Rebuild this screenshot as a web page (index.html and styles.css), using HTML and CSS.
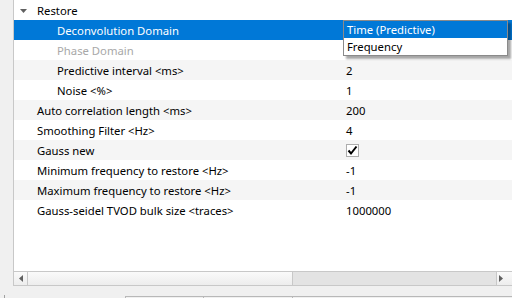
FILE: index.html
```html
<!DOCTYPE html>
<html lang="en">
<head>
    <meta charset="UTF-8">
    <title>Properties</title>
    <link rel="stylesheet" href="styles.css">
</head>
<body>
    <div class="main">
        <div class="gutter"></div>
        <div class="panel">
            <div class="rows">
                <div class="row">
                    <div class="name lvl0">
                        <svg class="caret" width="7" height="4" viewBox="0 0 7 4"><path d="M0 0H7L3.5 4Z" fill="#606060"/></svg>
                        Restore
                    </div>
                    <div class="value"></div>
                </div>
                <div class="row selected">
                    <div class="name lvl2">Deconvolution Domain</div>
                    <div class="value"></div>
                </div>
                <div class="row">
                    <div class="name lvl2 disabled">Phase Domain</div>
                    <div class="value"></div>
                </div>
                <div class="row alt">
                    <div class="name lvl2">Predictive interval &lt;ms&gt;</div>
                    <div class="value">2</div>
                </div>
                <div class="row">
                    <div class="name lvl2">Noise &lt;%&gt;</div>
                    <div class="value">1</div>
                </div>
                <div class="row alt">
                    <div class="name lvl1">Auto correlation length &lt;ms&gt;</div>
                    <div class="value">200</div>
                </div>
                <div class="row">
                    <div class="name lvl1">Smoothing Filter &lt;Hz&gt;</div>
                    <div class="value">4</div>
                </div>
                <div class="row alt">
                    <div class="name lvl1">Gauss new</div>
                    <div class="value">
                        <span class="check">
                            <svg width="11" height="11" viewBox="0 0 11 11"><path d="M1.5 5.5L4 8.5L9.5 1.5" fill="none" stroke="#000" stroke-width="2"/></svg>
                        </span>
                    </div>
                </div>
                <div class="row">
                    <div class="name lvl1">Minimum frequency to restore &lt;Hz&gt;</div>
                    <div class="value">-1</div>
                </div>
                <div class="row alt">
                    <div class="name lvl1">Maximum frequency to restore &lt;Hz&gt;</div>
                    <div class="value">-1</div>
                </div>
                <div class="row">
                    <div class="name lvl1">Gauss-seidel TVOD bulk size &lt;traces&gt;</div>
                    <div class="value">1000000</div>
                </div>
            </div>
            <div class="hscroll">
                <div class="sbtn">
                    <svg width="4" height="7" viewBox="0 0 4 7"><path d="M4 0V7L0 3.5Z" fill="#606060"/></svg>
                </div>
                <div class="track"></div>
                <div class="thumb"></div>
                <div class="sbtn right">
                    <svg width="4" height="7" viewBox="0 0 4 7"><path d="M0 0V7L4 3.5Z" fill="#606060"/></svg>
                </div>
            </div>
            <div class="dropdown">
                <div class="option active">Time (Predictive)</div>
                <div class="option">Frequency</div>
            </div>
        </div>
    </div>
    <div class="bottom">
        <div class="tick"></div>
        <div class="tab first"></div>
        <div class="tab second"></div>
        <div class="tab third"></div>
    </div>
</body>
</html>
```

FILE: styles.css
```css
body {
    margin: 0;
    width: 512px;
    height: 298px;
    overflow: hidden;
    background-color: #f0f0f0;
    font-family: 'Noto Sans', 'Open Sans', sans-serif;
    font-size: 11.3px;
    color: #000;
}
.main {
    display: flex;
    height: 286px;
}
.gutter {
    width: 13px;
    flex: none;
}
.panel {
    flex: 1;
    position: relative;
    display: flex;
    flex-direction: column;
    background-color: #fff;
    border-left: 1px solid #c8c8c8;
    border-bottom: 1px solid #c8c8c8;
}
.rows {
    flex: 1;
}
.row {
    display: flex;
    height: 20px;
    line-height: 20px;
    white-space: nowrap;
}
.row.alt {
    background-color: #f5f5f5;
}
.row.selected {
    background-color: #0078d7;
    color: #fff;
}
.name {
    width: 329px;
    flex: none;
    display: flex;
    align-items: center;
    padding-top: 1px;
    box-sizing: border-box;
}
.lvl0 {
    padding-left: 6px;
}
.lvl1 {
    padding-left: 23px;
}
.lvl2 {
    padding-left: 43px;
}
.caret {
    margin-right: 10px;
}
.disabled {
    color: #a8a8a8;
}
.value {
    flex: 1;
    padding-left: 3px;
    padding-top: 1px;
    display: flex;
    align-items: center;
}
.check {
    width: 11px;
    height: 11px;
    border: 1px solid #adadad;
    background-color: #fff;
    display: flex;
    align-items: center;
    justify-content: center;
}
.hscroll {
    height: 13px;
    display: flex;
    border-top: 1px solid #c8c8c8;
    background: linear-gradient(#fafafa, #ededed);
}
.sbtn {
    width: 13px;
    flex: none;
    display: flex;
    align-items: center;
    justify-content: center;
    border-right: 1px solid #c8c8c8;
}
.sbtn.right {
    border-right: none;
    border-left: 1px solid #c8c8c8;
    justify-content: flex-start;
    padding-left: 2px;
}
.track {
    width: 264px;
    flex: none;
}
.thumb {
    flex: 1;
    background-color: #e3e3e3;
    border-left: 1px solid #c8c8c8;
}
.dropdown {
    position: absolute;
    left: 329px;
    top: 20px;
    width: 163px;
    border: 1px solid #8a8a8a;
    background-color: #fff;
    box-shadow: 3px 3px 2px rgba(0, 0, 0, 0.35);
}
.option {
    height: 17px;
    line-height: 18px;
    padding-left: 3px;
}
.option.active {
    background-color: #0078d7;
    color: #fff;
}
.bottom {
    position: relative;
    height: 12px;
}
.tick {
    position: absolute;
    left: 4px;
    top: 9px;
    width: 1px;
    height: 3px;
    background-color: #a0a0a0;
}
.tab {
    position: absolute;
    top: 10px;
    height: 4px;
    border-top: 1px solid #b8b8b8;
    border-left: 1px solid #b8b8b8;
}
.tab.first {
    left: 125px;
    width: 78px;
}
.tab.second {
    left: 203px;
    width: 89px;
}
.tab.third {
    left: 292px;
    width: 220px;
}
```
